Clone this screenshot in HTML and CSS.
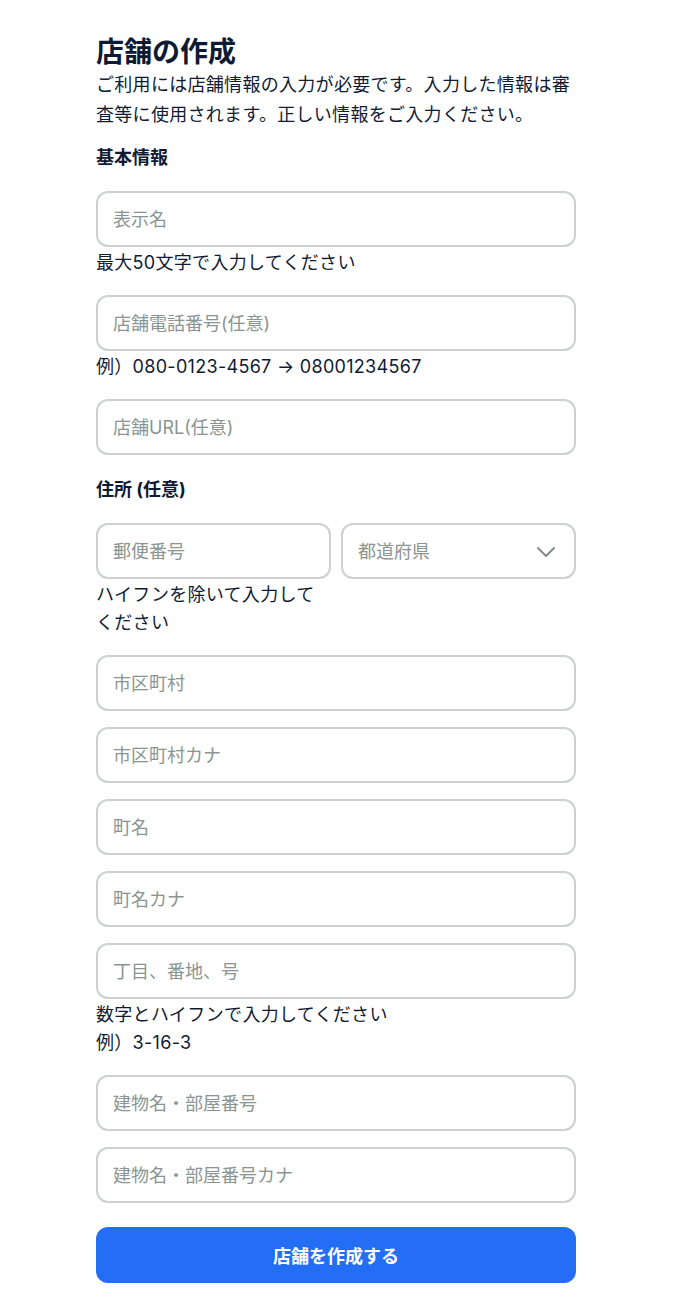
FILE: index.html
```html
<!DOCTYPE html>
<html lang="ja">
<head>
<meta charset="utf-8">
<title>店舗の作成</title>
<link rel="stylesheet" href="styles.css">
</head>
<body>
<main class="page">
  <h1 class="title">店舗の作成</h1>
  <p class="lead">ご利用には店舗情報の入力が必要です。入力した情報は審査等に使用されます。正しい情報をご入力ください。</p>

  <h2 class="section section-first">基本情報</h2>
  <div class="fields">
    <div class="field">
      <input class="input" type="text" placeholder="表示名">
      <p class="help">最大50文字で入力してください</p>
    </div>
    <div class="field">
      <input class="input" type="tel" placeholder="店舗電話番号(任意)">
      <p class="help">例）080-0123-4567 → 08001234567</p>
    </div>
    <div class="field">
      <input class="input" type="url" placeholder="店舗URL(任意)">
    </div>
  </div>

  <h2 class="section">住所 (任意)</h2>
  <div class="fields">
    <div class="row">
      <div class="field">
        <input class="input" type="text" placeholder="郵便番号">
        <p class="help">ハイフンを除いて入力してください</p>
      </div>
      <div class="field">
        <div class="select-wrap">
          <select class="input select">
            <option>都道府県</option>
          </select>
          <svg class="chevron" width="18" height="10" viewBox="0 0 18 10" aria-hidden="true"><polyline points="1,1 9,9 17,1" fill="none" stroke="#7d8886" stroke-width="1.8" stroke-linecap="round" stroke-linejoin="round"/></svg>
        </div>
      </div>
    </div>
    <div class="field"><input class="input" type="text" placeholder="市区町村"></div>
    <div class="field"><input class="input" type="text" placeholder="市区町村カナ"></div>
    <div class="field"><input class="input" type="text" placeholder="町名"></div>
    <div class="field"><input class="input" type="text" placeholder="町名カナ"></div>
    <div class="field">
      <input class="input" type="text" placeholder="丁目、番地、号">
      <p class="help">数字とハイフンで入力してください<br>例）3-16-3</p>
    </div>
    <div class="field"><input class="input" type="text" placeholder="建物名・部屋番号"></div>
    <div class="field"><input class="input" type="text" placeholder="建物名・部屋番号カナ"></div>
  </div>

  <button class="submit" type="button">店舗を作成する</button>
</main>
</body>
</html>
```

FILE: styles.css
```css
* {
  box-sizing: border-box;
}

html, body {
  margin: 0;
  padding: 0;
  background: #ffffff;
}

body {
  font-family: "Inter", "Noto Sans CJK JP", "Noto Sans", sans-serif;
  color: #101b33;
}

.page {
  width: 480px;
  margin-left: 96px;
  padding: 34px 0 33px;
}

.title {
  margin: 0;
  font-size: 28px;
  line-height: 36px;
  font-weight: 700;
  color: #0e1a33;
}

.lead {
  margin: 0;
  font-size: 18px;
  line-height: 30px;
  letter-spacing: 0.3px;
}

.section {
  margin: 21px 0 19px;
  font-size: 18px;
  line-height: 28px;
  font-weight: 700;
}

.section-first {
  margin-top: 14px;
}

.fields {
  display: flex;
  flex-direction: column;
  gap: 16px;
}

.field {
  display: flex;
  flex-direction: column;
  min-width: 0;
}

.row {
  display: grid;
  grid-template-columns: 1fr 1fr;
  gap: 10px;
  align-items: start;
}

.input {
  display: block;
  width: 100%;
  height: 56px;
  margin: 0;
  padding: 0 15px;
  border: 2px solid #cdd1cd;
  border-radius: 12px;
  background: #ffffff;
  font-family: inherit;
  font-size: 18px;
  color: #101b33;
  outline: none;
}

.input::placeholder {
  color: #8a9491;
  opacity: 1;
}

.select-wrap {
  position: relative;
}

.select {
  appearance: none;
  -webkit-appearance: none;
  color: #8a9491;
  padding-right: 48px;
}

.chevron {
  position: absolute;
  right: 21px;
  top: 24px;
  pointer-events: none;
}

.help {
  margin: 0;
  padding: 2px 0;
  font-size: 18px;
  line-height: 28px;
  letter-spacing: 0.3px;
}

.submit {
  display: block;
  width: 100%;
  height: 56px;
  margin-top: 24px;
  border: none;
  border-radius: 12px;
  background: #246ef5;
  color: #ffffff;
  font-family: inherit;
  font-size: 18px;
  font-weight: 700;
  cursor: pointer;
}
```
